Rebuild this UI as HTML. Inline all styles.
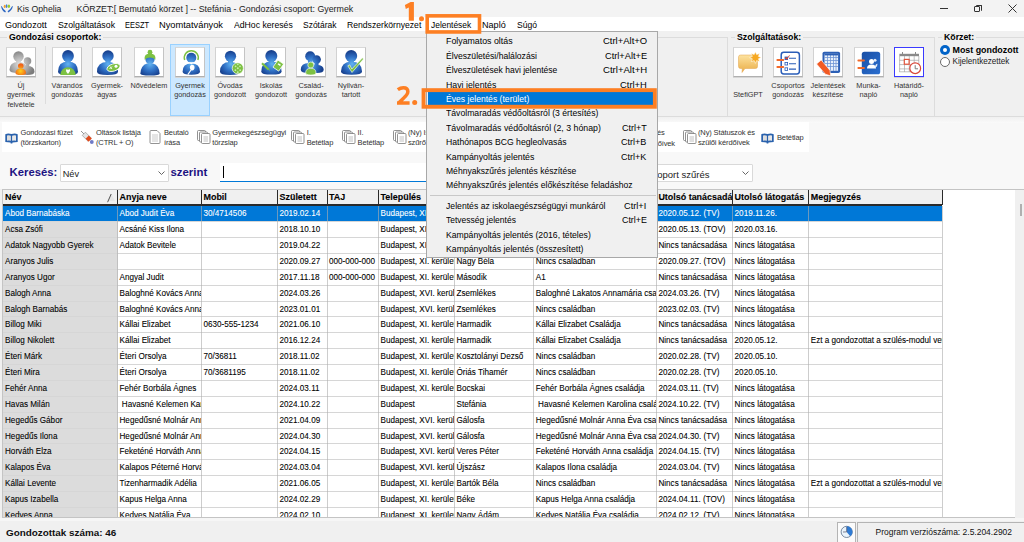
<!DOCTYPE html><html><head><meta charset="utf-8"><style>
*{margin:0;padding:0;box-sizing:border-box}
html,body{width:1024px;height:542px;overflow:hidden;background:#f0f0f0;font-family:"Liberation Sans",sans-serif;color:#000;position:relative}
.abs{position:absolute;white-space:nowrap}
.t{position:absolute;white-space:nowrap;line-height:1}
#title{left:0;top:0;width:1024px;height:17px;background:#f3f3f3}
#menubar{left:0;top:17px;width:1024px;height:14px;background:#fff}
.mi{position:absolute;top:19.8px;font-size:9px;line-height:10px;color:#000}
#grp{left:0;top:31px;width:1024px;height:86px;background:#f0f0f0}
.gl{position:absolute;background:#dcdcdc}
.glab{position:absolute;font-weight:bold;font-size:8.75px;line-height:10px;background:#f0f0f0;padding:0 2px;color:#000}
.ib{position:absolute;top:47px;width:30px;height:30px;background:#fff;border:1px solid;border-color:#d8d8d8 #c4c4c4 #b0b0b0 #d2d2d2;box-shadow:0 1px 0 #d6d6d6}
.ib svg{position:absolute;left:1px;top:1px}
.il{position:absolute;top:80.5px;width:44px;text-align:center;font-size:7.3px;line-height:9.7px;color:#333}
#strip{left:0;top:117px;width:1024px;height:72px;background:#f8f8f8}
#tb{left:2px;top:122px;width:807px;height:30px;background:#fff}
.tl{position:absolute;font-size:7.5px;letter-spacing:-0.13px;line-height:9.8px;color:#333}
#grid{left:2px;top:189px;width:1022px;height:329px;background:#fff;border:1px solid #c4c4c4;border-right:none;overflow:hidden}
.hd{position:absolute;top:190px;height:14.5px;font-weight:bold;font-size:8.95px;line-height:15.6px;padding-left:2px;overflow:hidden;white-space:nowrap;-webkit-text-stroke:0.1px #000}
.c{position:absolute;height:15px;font-size:8.15px;line-height:15.5px;padding-left:2px;overflow:hidden;white-space:nowrap;color:#000;-webkit-text-stroke:0.08px currentColor}
.sel{color:#fff}
.c0{background:#dcdcdc}
#status{left:0;top:521px;width:1024px;height:21px;background:#f0f0f0}
#stband{left:0;top:518px;width:1024px;height:3px;background:#f6f6f6}
#menu{left:426px;top:31px;width:232px;height:227px;background:#f0f0f0;border:1px solid #a8a8a8}
.mt{position:absolute;left:19px;font-size:8.8px;line-height:10px;color:#000}
.ms{position:absolute;right:9px;font-size:8.8px;line-height:10px;color:#000;text-align:right}
.orange{position:absolute;border:3.7px solid #fd7f23}
.onum{position:absolute;font-weight:bold;color:#ff7f27;font-size:26px;line-height:26px}
</style></head><body>
<div id="title" class="abs"></div>
<svg class="abs" style="left:0;top:0" width="15" height="15" viewBox="0 0 15 15"><path d="M1.1 6.2 Q1.6 10.3 5.2 12.6 L5.9 11.2 Q3.2 9.6 1.6 6.1Z" fill="#2d66c2"/><path d="M12.8 6.2 Q12.3 10.3 8.2 12.5 L7.6 11.2 Q10.6 9.6 12.2 6.1Z" fill="#2d66c2"/><ellipse cx="4.7" cy="6.4" rx="1" ry="1.6" fill="#f7a12a"/><ellipse cx="6.6" cy="6.1" rx="0.9" ry="1.9" fill="#3f7fd6"/><ellipse cx="8.9" cy="6.2" rx="1.2" ry="1.7" fill="#9ccc2c"/></svg>
<div class="t" style="left:17px;top:5px;font-size:8.7px;color:#222">Kis Ophelia</div>
<div class="t" style="left:76.5px;top:5px;font-size:8.84px;color:#222">KÖRZET:[ Bemutató körzet ] -- Stefánia - Gondozási csoport: Gyermek</div>
<div class="abs" style="left:940px;top:8px;width:8px;height:1px;background:#333"></div>
<div class="abs" style="left:974px;top:6px;width:6px;height:6px;border:1px solid #333;border-radius:1px"></div><div class="abs" style="left:976px;top:4.5px;width:6px;height:6px;border-top:1px solid #333;border-right:1px solid #333;border-radius:1px"></div>
<svg class="abs" style="left:1008px;top:4px" width="9" height="9"><path d="M0.5 0.5L8.5 8.5M8.5 0.5L0.5 8.5" stroke="#333" stroke-width="1"/></svg>
<div id="menubar" class="abs"></div>
<div class="mi" style="left:5px;transform:scaleX(1.004);transform-origin:0 0">Gondozott</div>
<div class="mi" style="left:57.5px;transform:scaleX(0.974);transform-origin:0 0">Szolgáltatások</div>
<div class="mi" style="left:124.5px;transform:scaleX(0.827);transform-origin:0 0">EESZT</div>
<div class="mi" style="left:159px;transform:scaleX(1.032);transform-origin:0 0">Nyomtatványok</div>
<div class="mi" style="left:233.5px;transform:scaleX(0.963);transform-origin:0 0">AdHoc keresés</div>
<div class="mi" style="left:303px;transform:scaleX(0.943);transform-origin:0 0">Szótárak</div>
<div class="mi" style="left:346.75px;transform:scaleX(0.958);transform-origin:0 0">Rendszerkörnyezet</div>
<div class="mi" style="left:431.4px;transform:scaleX(0.934);transform-origin:0 0">Jelentések</div>
<div class="mi" style="left:482.25px;transform:scaleX(1.010);transform-origin:0 0">Napló</div>
<div class="mi" style="left:517px;transform:scaleX(0.952);transform-origin:0 0">Súgó</div>
<div id="grp" class="abs"></div>
<div class="gl" style="left:0;top:37px;width:727px;height:1px"></div>
<div class="gl" style="left:726.5px;top:37px;width:1px;height:80px"></div>
<div class="gl" style="left:731px;top:37px;width:204px;height:1px"></div>
<div class="gl" style="left:934px;top:37px;width:1px;height:80px"></div>
<div class="gl" style="left:938px;top:37px;width:86px;height:1px"></div>
<div class="gl" style="left:0;top:116px;width:1024px;height:1px"></div>
<div class="gl" style="left:45px;top:46px;width:1px;height:58px"></div>
<div class="glab" style="left:7px;top:32.4px">Gondozási csoportok:</div>
<div class="glab" style="left:735px;top:32.4px">Szolgáltatások:</div>
<div class="glab" style="left:942px;top:32.4px">Körzet:</div>
<div class="abs" style="left:170px;top:44px;width:40px;height:72px;background:#cce8ff;border:1px solid #99d1ff"></div>
<svg width="0" height="0" style="position:absolute"><defs>
<radialGradient id="gb" gradientUnits="userSpaceOnUse" cx="14" cy="15" r="13"><stop offset="0" stop-color="#62b4f2"/><stop offset="0.55" stop-color="#2f6fc4"/><stop offset="1" stop-color="#173f8c"/></radialGradient>
<radialGradient id="gb2" gradientUnits="userSpaceOnUse" cx="12" cy="16" r="13"><stop offset="0" stop-color="#62b4f2"/><stop offset="0.55" stop-color="#2f6fc4"/><stop offset="1" stop-color="#173f8c"/></radialGradient>
<radialGradient id="gg" gradientUnits="userSpaceOnUse" cx="12" cy="15" r="14"><stop offset="0" stop-color="#e2e2e2"/><stop offset="0.6" stop-color="#a9a9a9"/><stop offset="1" stop-color="#7c7c7c"/></radialGradient>
<radialGradient id="go" gradientUnits="userSpaceOnUse" cx="12.5" cy="22" r="6"><stop offset="0" stop-color="#ffd21a"/><stop offset="1" stop-color="#f0641a"/></radialGradient>
<linearGradient id="gy" x1="0" y1="0" x2="0" y2="1"><stop offset="0" stop-color="#fde3a0"/><stop offset="1" stop-color="#e9ac45"/></linearGradient>
<linearGradient id="gn" x1="0" y1="0" x2="1" y2="1"><stop offset="0" stop-color="#1a4fa5"/><stop offset="1" stop-color="#2a6fd0"/></linearGradient>
</defs></svg>
<div class="ib" style="left:6px"><svg width="28" height="28" viewBox="0 0 28 28"><circle cx="10.5" cy="7.5" r="5.2" fill="url(#gg)"/><rect x="8.16" y="10.620000000000001" width="4.680000000000001" height="4.38" fill="url(#gg)"/><path d="M1.5 20.8 Q1.5 13 10.25 13 Q19 13 19 20.8 Q19 24 10.25 24 Q1.5 24 1.5 20.8Z" fill="url(#gg)"/><circle cx="19.5" cy="12" r="3.8" fill="url(#gg)"/><rect x="17.79" y="14.28" width="3.42" height="4.720000000000001" fill="url(#gg)"/><path d="M12 22.8 Q12 17 19.25 17 Q26.5 17 26.5 22.8 Q26.5 26 19.25 26 Q12 26 12 22.8Z" fill="url(#gg)"/><circle cx="12.8" cy="17" r="2.8" fill="url(#go)"/><path d="M7.5 24 Q7.5 19.5 12.8 19.5 Q18 19.5 18 24 Q18 26 12.8 26 Q7.5 26 7.5 24Z" fill="url(#go)"/></svg></div>
<div class="il" style="left:-1px">Új<br>gyermek<br>felvétele</div>
<div class="ib" style="left:52px"><svg width="28" height="28" viewBox="0 0 28 28"><circle cx="14" cy="7" r="5.9" fill="url(#gb)"/><rect x="11.344999999999999" y="10.54" width="5.3100000000000005" height="3.96" fill="url(#gb)"/><path d="M4 22.8 Q4 12.5 14.0 12.5 Q24 12.5 24 22.8 Q24 26 14.0 26 Q4 26 4 22.8Z" fill="url(#gb)"/><path d="M6.3 26 A7.7 7.7 0 0 1 21.7 26Z" fill="#7dc143"/><path d="M14 25 Q11.5 22.5 12 20.8 Q13 19.8 14 21 Q15.2 19.6 16 20.5 Q16.5 22 14 25Z" fill="#fff"/></svg></div>
<div class="il" style="left:45px">Várandós<br>gondozás</div>
<div class="ib" style="left:92px"><svg width="28" height="28" viewBox="0 0 28 28"><circle cx="14" cy="7" r="5.7" fill="url(#gb)"/><rect x="11.435" y="10.42" width="5.13" height="4.58" fill="url(#gb)"/><path d="M3 22.8 Q3 13 13.5 13 Q24 13 24 22.8 Q24 26 13.5 26 Q3 26 3 22.8Z" fill="url(#gb)"/><ellipse cx="19.5" cy="18.5" rx="6.8" ry="3.6" transform="rotate(-18 19.5 18.5)" fill="#7dc143" stroke="#fff" stroke-width="0.8"/><path d="M15.5 20 L18 17.5 M16 17.5 L18 20" stroke="#fff" stroke-width="0.9"/><circle cx="22" cy="17.3" r="1.5" fill="#fff"/></svg></div>
<div class="il" style="left:85px">Gyermek-<br>ágyas</div>
<div class="ib" style="left:134px"><svg width="28" height="28" viewBox="0 0 28 28"><circle cx="14" cy="10.5" r="4.6" fill="url(#gb)"/><path d="M4.4 24.6 Q4.8 16.5 11 14.6 L14 14 L17 14.6 Q23.2 16.5 23.6 24.6 Q23.6 26.6 14 26.6 Q4.4 26.6 4.4 24.6Z" fill="url(#gb)"/><circle cx="14" cy="3.2" r="2.4" fill="#7dc143"/><path d="M8.6 10.8 Q7.8 4.6 14 4.6 Q20.2 4.6 19.4 10.8 Q17 8.4 14 8.4 Q11 8.4 8.6 10.8Z" fill="#7dc143"/></svg></div>
<div class="il" style="left:127px">Nővédelem</div>
<div class="ib" style="left:175px"><svg width="28" height="28" viewBox="0 0 28 28"><path d="M7.7 11 A7 7 0 1 1 20.9 11" stroke="#7dc143" stroke-width="1.5" fill="none"/><circle cx="14.3" cy="8.8" r="5" fill="url(#gb)"/><path d="M5.6 22.8 Q5.6 14.6 14.3 14.6 Q23 14.6 23 22.8 Q23 25.7 14.3 25.7 Q5.6 25.7 5.6 22.8Z" fill="url(#gb)"/><path d="M11.8 13.2 L16.8 13.2 L14.3 15.6Z" fill="#fff"/><ellipse cx="15.2" cy="18.6" rx="2.3" ry="2.8" fill="#fff"/><path d="M14.2 20.8 L10.8 25.6" stroke="#fff" stroke-width="1.1"/></svg></div>
<div class="il" style="left:168px">Gyermek<br>gondozás</div>
<div class="ib" style="left:215px"><svg width="28" height="28" viewBox="0 0 28 28"><circle cx="13.5" cy="7.3" r="5.6" fill="url(#gb)"/><rect x="10.98" y="10.66" width="5.04" height="4.34" fill="url(#gb)"/><path d="M3 22.8 Q3 13 13.0 13 Q23 13 23 22.8 Q23 26 13.0 26 Q3 26 3 22.8Z" fill="url(#gb)"/><circle cx="20.8" cy="19.3" r="5.6" fill="#7dc143" stroke="#fff" stroke-width="0.7"/><circle cx="20.8" cy="19.3" r="1" fill="#c9ecac"/><circle cx="18.6" cy="17.3" r="0.9" fill="#c9ecac"/><circle cx="23" cy="17.3" r="0.9" fill="#c9ecac"/><circle cx="18.4" cy="21.2" r="0.9" fill="#c9ecac"/><circle cx="23.2" cy="21.2" r="0.9" fill="#c9ecac"/><circle cx="20.8" cy="23.2" r="0.9" fill="#c9ecac"/><circle cx="20.8" cy="15.3" r="0.9" fill="#c9ecac"/></svg></div>
<div class="il" style="left:208px">Óvodás<br>gondozott</div>
<div class="ib" style="left:256px"><svg width="28" height="28" viewBox="0 0 28 28"><circle cx="13.3" cy="7" r="6" fill="url(#gb)"/><rect x="10.600000000000001" y="10.6" width="5.4" height="4.0" fill="url(#gb)"/><path d="M3.3 22.400000000000002 Q3.3 12.6 13.450000000000001 12.6 Q23.6 12.6 23.6 22.400000000000002 Q23.6 25.6 13.450000000000001 25.6 Q3.3 25.6 3.3 22.400000000000002Z" fill="url(#gb)"/><rect x="16.8" y="12.3" width="7" height="8.6" transform="rotate(35 20.3 16.6)" fill="#7dc143" stroke="#fff" stroke-width="0.7"/><rect x="19" y="14.5" width="3" height="1.5" transform="rotate(35 20.3 16.6)" fill="#fff"/><path d="M4 14.3 L10.5 20.5" stroke="#7dc143" stroke-width="2.2"/><path d="M10 20 L12 22.5 L11 19.5Z" fill="#7dc143"/></svg></div>
<div class="il" style="left:249px">Iskolás<br>gondozott</div>
<div class="ib" style="left:296px"><svg width="28" height="28" viewBox="0 0 28 28"><circle cx="12.2" cy="7.2" r="5" fill="url(#gb)"/><rect x="9.95" y="10.2" width="4.5" height="5.8" fill="url(#gb)"/><path d="M2.8 20.8 Q2.8 14 10.9 14 Q19 14 19 20.8 Q19 24 10.9 24 Q2.8 24 2.8 20.8Z" fill="url(#gb)"/><circle cx="18.6" cy="10.5" r="4.3" fill="url(#gb2)"/><rect x="16.665000000000003" y="13.08" width="3.87" height="4.92" fill="url(#gb2)"/><path d="M12 20.8 Q12 16 18.85 16 Q25.7 16 25.7 20.8 Q25.7 24 18.85 24 Q12 24 12 20.8Z" fill="url(#gb2)"/><circle cx="12.8" cy="16" r="3" fill="#7dc143" stroke="#fff" stroke-width="0.6"/><path d="M7.6 24 Q7.6 19.3 12.8 19.3 Q18 19.3 18 24 Q18 26 12.8 26 Q7.6 26 7.6 24Z" fill="#7dc143" stroke="#fff" stroke-width="0.6"/></svg></div>
<div class="il" style="left:289px">Család-<br>gondozás</div>
<div class="ib" style="left:336px"><svg width="28" height="28" viewBox="0 0 28 28"><circle cx="13.2" cy="7" r="6" fill="url(#gb)"/><rect x="10.5" y="10.6" width="5.4" height="4.200000000000001" fill="url(#gb)"/><path d="M3 22.6 Q3 12.8 13.5 12.8 Q24 12.8 24 22.6 Q24 25.8 13.5 25.8 Q3 25.8 3 22.6Z" fill="url(#gb)"/><path d="M9.8 16.8 L11.8 15.8 L13.8 20 L24.5 8.8 L25.5 10 L14 23.5Z" fill="#7dc143" stroke="#fff" stroke-width="0.6"/></svg></div>
<div class="il" style="left:329px">Nyilván-<br>tartott</div>
<div class="ib" style="left:733px"><svg width="28" height="28" viewBox="0 0 28 28"><path d="M3.5 8 Q3.5 6 5.5 6 L20.5 6 Q22.5 6 22.5 8 L22.5 17.5 Q22.5 19.5 20.5 19.5 L10 19.5 L7 23.5 L7.3 19.5 L5.5 19.5 Q3.5 19.5 3.5 17.5Z" fill="url(#gy)" stroke="#e2a24a" stroke-width="0.5"/><path d="M20.4 2.8 L21.6 5.6 L24.5 4.6 L23.4 7.4 L26.2 8.6 L23.4 9.8 L24.5 12.6 L21.6 11.6 L20.4 14.4 L19.2 11.6 L16.3 12.6 L17.4 9.8 L14.6 8.6 L17.4 7.4 L16.3 4.6 L19.2 5.6Z" fill="#f6a821" stroke="#fff" stroke-width="0.5"/></svg></div>
<div class="il" style="left:726px"><br>StefiGPT</div>
<div class="ib" style="left:773px"><svg width="28" height="28" viewBox="0 0 28 28"><rect x="6.2" y="3.3" width="18.2" height="21.6" rx="2.6" fill="#fff" stroke="#2a5db8" stroke-width="1.5"/><path d="M2.3 11 H8.3 M2.3 18 H8.3" stroke="#f26a2a" stroke-width="1.8" stroke-linecap="round"/><rect x="10" y="8" width="2.6" height="2.6" fill="#e2533a" stroke="#2a5db8" stroke-width="0.8"/><rect x="10" y="13.4" width="2.6" height="2.6" fill="none" stroke="#2a5db8" stroke-width="0.8"/><rect x="10" y="18.8" width="2.6" height="2.6" fill="none" stroke="#2a5db8" stroke-width="0.8"/><path d="M14 9.3H21 M14 14.7H21 M14 20.1H21" stroke="#2a5db8" stroke-width="1.1"/><path d="M10.5 9 L11.8 10.3 L14.5 6.3" stroke="#e03a2c" stroke-width="0.9" fill="none"/></svg></div>
<div class="il" style="left:766px">Csoportos<br>gondozás</div>
<div class="ib" style="left:813px"><svg width="28" height="28" viewBox="0 0 28 28"><rect x="7.5" y="2.7" width="17.6" height="21.3" rx="1.8" fill="#2c5fb5"/><rect x="9.5" y="4.8" width="13.6" height="17" fill="#e8f0fb"/><path d="M9.5 8.5H23 M9.5 11.5H23 M9.5 14.5H23 M9.5 17.5H23 M12.5 5V22 M15.5 5V22 M18.5 5V22 M21 5V22" stroke="#6f95d6" stroke-width="0.8"/><rect x="9.5" y="4.8" width="13.6" height="1.6" fill="#2c5fb5"/><path d="M1.6 15 L6.2 11 L15 21.4 L15.6 26.8 L10.4 25.2Z" fill="#f15a24" stroke="#fff" stroke-width="0.6"/></svg></div>
<div class="il" style="left:806px">Jelentések<br>készítése</div>
<div class="ib" style="left:853.5px"><svg width="28" height="28" viewBox="0 0 28 28"><rect x="5.8" y="2.7" width="18.4" height="22.6" rx="2.6" fill="url(#gn)"/><path d="M2.3 11.5H8 M2.3 19H8" stroke="#f26a2a" stroke-width="1.8" stroke-linecap="round"/><circle cx="15.5" cy="12.5" r="2.5" fill="#fff"/><path d="M11 19.5 Q11 15.5 15.5 15.5 Q20 15.5 20 19.5Z" fill="#fff"/><circle cx="19" cy="11.3" r="1.5" fill="#e4ecf7"/><path d="M18.5 18.5 Q19.5 15 21.5 14.8 L21 17.5Z" fill="#e4ecf7"/></svg></div>
<div class="il" style="left:846.5px">Munka-<br>napló</div>
<div class="ib" style="left:894px;border:1px solid #3a3aff"><svg width="28" height="28" viewBox="0 0 28 28"><rect x="3.4" y="5.3" width="19.6" height="17.6" fill="#fff"/><rect x="3.4" y="4.8" width="19.6" height="2.4" fill="#8a8a8a"/><path d="M3.6 7V23 M8.5 7V23 M13.3 7V23 M18.2 7V23 M22.8 7V23 M3.4 11.3H23 M3.4 15.6H23 M3.4 19.9H23 M3.4 22.8H23" stroke="#a6a6a6" stroke-width="0.7"/><path d="M6.5 3V6 M19.5 3V6" stroke="#8a8a8a" stroke-width="1"/><rect x="8.3" y="10.4" width="4.8" height="4.8" fill="#fff" stroke="#e2533a" stroke-width="1.2"/><circle cx="19.2" cy="19.2" r="5.4" fill="#fff" stroke="#d9473a" stroke-width="1.2"/><path d="M19.2 16.2V19.8H22" stroke="#7a7a7a" stroke-width="1" fill="none"/></svg></div>
<div class="il" style="left:887px">Határidő-<br>napló</div>
<div class="abs" style="left:940px;top:45px;width:10px;height:10px;border-radius:50%;background:#0063c8"></div><div class="abs" style="left:943px;top:48px;width:4px;height:4px;border-radius:50%;background:#fff"></div>
<div class="t" style="left:952.5px;top:46px;font-size:8.9px;font-weight:bold">Most gondozott</div>
<div class="abs" style="left:940px;top:57px;width:10px;height:10px;border-radius:50%;border:1px solid #6a6a6a;background:#fff"></div>
<div class="t" style="left:952.5px;top:58px;font-size:8.15px;color:#222">Kijelentkezettek</div>
<div id="strip" class="abs"></div>
<div class="abs" style="left:0;top:117px;width:1024px;height:6px;background:linear-gradient(#f0f0f0,#fafafa)"></div>
<div id="tb" class="abs"></div>
<svg class="abs" style="left:5px;top:132.5px" width="13" height="11" viewBox="0 0 13 11"><path d="M0.3 1.2 Q3.3 -0.1 6.5 1.1 Q9.7 -0.1 12.7 1.2 L12.7 9 L7.5 9.4 L7.3 10.4 L5.7 10.4 L5.5 9.4 L0.3 9Z" fill="#2a62ad"/><path d="M2 2.6 Q4 2 5.9 2.7 L5.9 7.8 Q4 7.3 2 7.7Z" fill="#dedede"/><path d="M7.1 2.7 Q9 2 11 2.6 L11 7.7 Q9 7.3 7.1 7.8Z" fill="#e8e8e8"/></svg>
<svg class="abs" style="left:80px;top:130px" width="15" height="15" viewBox="0 0 15 15"><path d="M1 1 L4 4" stroke="#777" stroke-width="0.8"/><path d="M2.2 5.4 L5.4 2.2 L11.2 8 L8 11.2Z" fill="#e4e4e4" stroke="#8a8a8a" stroke-width="0.6"/><path d="M5.6 8.8 L8.8 5.6 L11.8 8.6 L8.6 11.8Z" fill="#e04a1c"/><circle cx="11.8" cy="12" r="1.9" fill="#6f7bc8"/></svg>
<svg class="abs" style="left:149px;top:130px" width="12" height="14" viewBox="0 0 12 14"><path d="M1 1.5 Q1 0.5 2 0.5 L8 0.5 L11 3.5 L11 12.5 Q11 13.5 10 13.5 L2 13.5 Q1 13.5 1 12.5Z" fill="#fff" stroke="#777" stroke-width="0.8"/><path d="M3 5H9 M3 7H9 M3 9H9 M3 11H9" stroke="#aaa" stroke-width="0.6"/></svg>
<svg class="abs" style="left:196.5px;top:130px" width="14" height="14" viewBox="0 0 14 14"><rect x="0.5" y="0.5" width="8" height="10" rx="1" fill="#fff" stroke="#777" stroke-width="0.8"/><rect x="2.5" y="2" width="8" height="10" rx="1" fill="#fff" stroke="#777" stroke-width="0.8"/><rect x="4.5" y="3.5" width="8.5" height="10" rx="1" fill="#fff" stroke="#777" stroke-width="0.8"/><path d="M6.5 7H11 M6.5 9H11 M6.5 11H11" stroke="#999" stroke-width="0.6"/></svg>
<svg class="abs" style="left:291px;top:130px" width="14" height="14" viewBox="0 0 14 14"><rect x="0.5" y="0.5" width="8" height="10" rx="1" fill="#fff" stroke="#777" stroke-width="0.8"/><rect x="2.5" y="2" width="8" height="10" rx="1" fill="#fff" stroke="#777" stroke-width="0.8"/><rect x="4.5" y="3.5" width="8.5" height="10" rx="1" fill="#fff" stroke="#777" stroke-width="0.8"/><path d="M6.5 7H11 M6.5 9H11 M6.5 11H11" stroke="#999" stroke-width="0.6"/></svg>
<svg class="abs" style="left:342px;top:130px" width="14" height="14" viewBox="0 0 14 14"><rect x="0.5" y="0.5" width="8" height="10" rx="1" fill="#fff" stroke="#777" stroke-width="0.8"/><rect x="2.5" y="2" width="8" height="10" rx="1" fill="#fff" stroke="#777" stroke-width="0.8"/><rect x="4.5" y="3.5" width="8.5" height="10" rx="1" fill="#fff" stroke="#777" stroke-width="0.8"/><path d="M6.5 7H11 M6.5 9H11 M6.5 11H11" stroke="#999" stroke-width="0.6"/></svg>
<svg class="abs" style="left:392.5px;top:130px" width="14" height="14" viewBox="0 0 14 14"><rect x="0.5" y="0.5" width="8" height="10" rx="1" fill="#fff" stroke="#777" stroke-width="0.8"/><rect x="2.5" y="2" width="8" height="10" rx="1" fill="#fff" stroke="#777" stroke-width="0.8"/><rect x="4.5" y="3.5" width="8.5" height="10" rx="1" fill="#fff" stroke="#777" stroke-width="0.8"/><path d="M6.5 7H11 M6.5 9H11 M6.5 11H11" stroke="#999" stroke-width="0.6"/></svg>
<svg class="abs" style="left:683px;top:130px" width="14" height="14" viewBox="0 0 14 14"><rect x="0.5" y="0.5" width="8" height="10" rx="1" fill="#fff" stroke="#777" stroke-width="0.8"/><rect x="2.5" y="2" width="8" height="10" rx="1" fill="#fff" stroke="#777" stroke-width="0.8"/><rect x="4.5" y="3.5" width="8.5" height="10" rx="1" fill="#fff" stroke="#777" stroke-width="0.8"/><path d="M6.5 7H11 M6.5 9H11 M6.5 11H11" stroke="#999" stroke-width="0.6"/></svg>
<svg class="abs" style="left:761px;top:132.5px" width="13" height="11" viewBox="0 0 13 11"><path d="M0.3 1.2 Q3.3 -0.1 6.5 1.1 Q9.7 -0.1 12.7 1.2 L12.7 9 L7.5 9.4 L7.3 10.4 L5.7 10.4 L5.5 9.4 L0.3 9Z" fill="#2a62ad"/><path d="M2 2.6 Q4 2 5.9 2.7 L5.9 7.8 Q4 7.3 2 7.7Z" fill="#dedede"/><path d="M7.1 2.7 Q9 2 11 2.6 L11 7.7 Q9 7.3 7.1 7.8Z" fill="#e8e8e8"/></svg>
<div class="tl" style="left:20.5px;top:128.3px">Gondozási füzet<br>(törzskarton)</div>
<div class="tl" style="left:96px;top:128.3px">Oltások listája<br>(CTRL + O)</div>
<div class="tl" style="left:164px;top:128.3px">Beutaló<br>írása</div>
<div class="tl" style="left:212.3px;top:128.3px">Gyermekegészségügyi<br>törzslap</div>
<div class="tl" style="left:306.7px;top:128.3px">I.<br>Betétlap</div>
<div class="tl" style="left:357.6px;top:128.3px">II.<br>Betétlap</div>
<div class="tl" style="left:408px;top:128.3px">(Ny) Ismételt<br>szűrő kérdőívek</div>
<div class="tl" style="left:698px;top:128.3px">(Ny) Státuszok és<br>szülői kérdőívek</div>
<div class="tl" style="left:777px;top:133px">Betétlap</div>
<div class="tl" style="right:359.4px;top:128.3px">Életkori szűrések és</div><div class="tl" style="right:349px;top:138.5px">szülői kérdőívek</div>
<div class="t" style="left:9.6px;top:167.3px;font-size:11.3px;font-weight:bold;color:#1c1282">Keresés:</div>
<div class="abs" style="left:60px;top:164px;width:108.5px;height:17.5px;background:#fff;border:1px solid #d9d9d9;border-radius:1px"></div>
<div class="t" style="left:62.7px;top:169.8px;font-size:9.2px;color:#222">Név</div>
<svg class="abs" style="left:158px;top:171px" width="7" height="4"><path d="M0.5 0.5L3.5 3.5L6.5 0.5" stroke="#555" fill="none" stroke-width="0.9"/></svg>
<div class="t" style="left:170.5px;top:167.3px;font-size:11.4px;font-weight:bold;color:#1c1282">szerint</div>
<div class="abs" style="left:219.5px;top:163px;width:427px;height:19px;background:#fff;border-bottom:1.5px solid #0078d7"></div>
<div class="abs" style="left:222.5px;top:166px;width:1px;height:12px;background:#000"></div>
<div class="abs" style="left:590px;top:164px;width:162.5px;height:17.5px;background:#fff;border:1px solid #d9d9d9;border-radius:1px"></div>
<div class="t" style="right:314.5px;top:169.8px;font-size:9.5px;color:#222">Gondozási csoport szűrés</div>
<svg class="abs" style="left:742px;top:171px" width="7" height="4"><path d="M0.5 0.5L3.5 3.5L6.5 0.5" stroke="#555" fill="none" stroke-width="0.9"/></svg>
<div id="grid" class="abs"></div>
<div class="abs" style="left:1014.8px;top:190px;width:9.2px;height:328px;background:#f0f0f0"></div>
<div class="abs" style="left:1020px;top:203.5px;width:1.6px;height:12.5px;background:#b0b0b0"></div>
<div class="abs" style="left:3px;top:190px;width:939.4px;height:16.3px;background:#f0f0f0;border-bottom:2px solid #2a2a2a"></div>
<div class="hd" style="left:3px;width:113.5px">Név</div>
<div class="abs" style="left:117.0px;top:190px;width:1px;height:15px;background:#2a2a2a"></div>
<div class="hd" style="left:117.5px;width:83.0px">Anyja neve</div>
<div class="abs" style="left:201.0px;top:190px;width:1px;height:15px;background:#2a2a2a"></div>
<div class="hd" style="left:201.5px;width:75.0px">Mobil</div>
<div class="abs" style="left:277.0px;top:190px;width:1px;height:15px;background:#2a2a2a"></div>
<div class="hd" style="left:277.5px;width:48.5px">Született</div>
<div class="abs" style="left:326.5px;top:190px;width:1px;height:15px;background:#2a2a2a"></div>
<div class="hd" style="left:327px;width:50.5px">TAJ</div>
<div class="abs" style="left:378.0px;top:190px;width:1px;height:15px;background:#2a2a2a"></div>
<div class="hd" style="left:378.5px;width:75.0px">Település</div>
<div class="abs" style="left:454.0px;top:190px;width:1px;height:15px;background:#2a2a2a"></div>
<div class="hd" style="left:454.5px;width:78.25px">Utca</div>
<div class="abs" style="left:533.25px;top:190px;width:1px;height:15px;background:#2a2a2a"></div>
<div class="hd" style="left:533.75px;width:121.64999999999998px">Család</div>
<div class="abs" style="left:655.9px;top:190px;width:1px;height:15px;background:#2a2a2a"></div>
<div class="hd" style="left:656.4px;width:75.20000000000005px">Utolsó tanácsadás</div>
<div class="abs" style="left:732.1px;top:190px;width:1px;height:15px;background:#2a2a2a"></div>
<div class="hd" style="left:732.6px;width:75.14999999999998px">Utolsó látogatás</div>
<div class="abs" style="left:808.25px;top:190px;width:1px;height:15px;background:#2a2a2a"></div>
<div class="hd" style="left:808.75px;width:132.64999999999998px">Megjegyzés</div>
<div class="abs" style="left:941.9px;top:190px;width:1px;height:15px;background:#2a2a2a"></div>
<svg class="abs" style="left:104.5px;top:191px" width="12" height="13"><path d="M6 2 L10 10 L2 10Z" fill="#e6e6e6"/><path d="M2.6 11.2 L6.2 3" stroke="#444" stroke-width="0.9"/></svg>
<div class="abs" style="left:3px;top:206.3px;width:939.4px;height:15.280000000000001px;background:#0078d7"></div>
<div class="abs" style="left:3px;top:222.18px;width:114.5px;height:294.82px;background:#dcdcdc"></div>
<div class="abs" style="left:0;top:206.3px;width:1024px;height:310.7px;overflow:hidden">
<div class="abs" style="left:3px;top:14.88px;width:939.4px;height:1px;background:#d6d6d6"></div>
<div class="abs" style="left:3px;top:30.76px;width:939.4px;height:1px;background:#d6d6d6"></div>
<div class="abs" style="left:3px;top:46.64px;width:939.4px;height:1px;background:#d6d6d6"></div>
<div class="abs" style="left:3px;top:62.52px;width:939.4px;height:1px;background:#d6d6d6"></div>
<div class="abs" style="left:3px;top:78.40px;width:939.4px;height:1px;background:#d6d6d6"></div>
<div class="abs" style="left:3px;top:94.28px;width:939.4px;height:1px;background:#d6d6d6"></div>
<div class="abs" style="left:3px;top:110.16px;width:939.4px;height:1px;background:#d6d6d6"></div>
<div class="abs" style="left:3px;top:126.04px;width:939.4px;height:1px;background:#d6d6d6"></div>
<div class="abs" style="left:3px;top:141.92px;width:939.4px;height:1px;background:#d6d6d6"></div>
<div class="abs" style="left:3px;top:157.80px;width:939.4px;height:1px;background:#d6d6d6"></div>
<div class="abs" style="left:3px;top:173.68px;width:939.4px;height:1px;background:#d6d6d6"></div>
<div class="abs" style="left:3px;top:189.56px;width:939.4px;height:1px;background:#d6d6d6"></div>
<div class="abs" style="left:3px;top:205.44px;width:939.4px;height:1px;background:#d6d6d6"></div>
<div class="abs" style="left:3px;top:221.32px;width:939.4px;height:1px;background:#d6d6d6"></div>
<div class="abs" style="left:3px;top:237.20px;width:939.4px;height:1px;background:#d6d6d6"></div>
<div class="abs" style="left:3px;top:253.08px;width:939.4px;height:1px;background:#d6d6d6"></div>
<div class="abs" style="left:3px;top:268.96px;width:939.4px;height:1px;background:#d6d6d6"></div>
<div class="abs" style="left:3px;top:284.84px;width:939.4px;height:1px;background:#d6d6d6"></div>
<div class="abs" style="left:3px;top:300.72px;width:939.4px;height:1px;background:#d6d6d6"></div>
<div class="abs" style="left:3px;top:316.60px;width:939.4px;height:1px;background:#d6d6d6"></div>
<div class="abs" style="left:117.0px;top:0;width:1px;height:312px;background:rgba(175,175,175,0.62)"></div>
<div class="abs" style="left:201.0px;top:0;width:1px;height:312px;background:rgba(175,175,175,0.62)"></div>
<div class="abs" style="left:277.0px;top:0;width:1px;height:312px;background:rgba(175,175,175,0.62)"></div>
<div class="abs" style="left:326.5px;top:0;width:1px;height:312px;background:rgba(175,175,175,0.62)"></div>
<div class="abs" style="left:378.0px;top:0;width:1px;height:312px;background:rgba(175,175,175,0.62)"></div>
<div class="abs" style="left:454.0px;top:0;width:1px;height:312px;background:rgba(175,175,175,0.62)"></div>
<div class="abs" style="left:533.25px;top:0;width:1px;height:312px;background:rgba(175,175,175,0.62)"></div>
<div class="abs" style="left:655.9px;top:0;width:1px;height:312px;background:rgba(175,175,175,0.62)"></div>
<div class="abs" style="left:732.1px;top:0;width:1px;height:312px;background:rgba(175,175,175,0.62)"></div>
<div class="abs" style="left:808.25px;top:0;width:1px;height:312px;background:rgba(175,175,175,0.62)"></div>
<div class="abs" style="left:941.9px;top:0;width:1px;height:312px;background:rgba(175,175,175,0.62)"></div>
<div class="c sel" style="left:3px;top:0.00px;width:114.20px">Abod Barnabáska</div>
<div class="c sel" style="left:117.5px;top:0.00px;width:83.70px">Abod Judit Éva</div>
<div class="c sel" style="left:201.5px;top:0.00px;width:75.70px">30/4714506</div>
<div class="c sel" style="left:277.5px;top:0.00px;width:49.20px">2019.02.14</div>
<div class="c sel" style="left:378.5px;top:0.00px;width:75.70px">Budapest, XI. kerület</div>
<div class="c sel" style="left:454.5px;top:0.00px;width:78.95px">Petőfi</div>
<div class="c sel" style="left:533.75px;top:0.00px;width:122.35px">Abod Judit Éva családja</div>
<div class="c sel" style="left:656.4px;top:0.00px;width:75.90px">2020.05.12. (TV)</div>
<div class="c sel" style="left:732.6px;top:0.00px;width:75.85px">2019.11.26.</div>
<div class="c" style="left:3px;top:15.88px;width:114.20px">Acsa Zsófi</div>
<div class="c" style="left:117.5px;top:15.88px;width:83.70px">Acsáné Kiss Ilona</div>
<div class="c" style="left:277.5px;top:15.88px;width:49.20px">2018.10.10</div>
<div class="c" style="left:378.5px;top:15.88px;width:75.70px">Budapest, XI. kerület</div>
<div class="c" style="left:454.5px;top:15.88px;width:78.95px">Kossuth</div>
<div class="c" style="left:533.75px;top:15.88px;width:122.35px">Nincs családban</div>
<div class="c" style="left:656.4px;top:15.88px;width:75.90px">2020.05.13. (TOV)</div>
<div class="c" style="left:732.6px;top:15.88px;width:75.85px">2020.03.16.</div>
<div class="c" style="left:3px;top:31.76px;width:114.20px">Adatok Nagyobb Gyerek</div>
<div class="c" style="left:117.5px;top:31.76px;width:83.70px">Adatok Bevitele</div>
<div class="c" style="left:277.5px;top:31.76px;width:49.20px">2019.04.22</div>
<div class="c" style="left:378.5px;top:31.76px;width:75.70px">Budapest, XI. kerület</div>
<div class="c" style="left:454.5px;top:31.76px;width:78.95px">Fő</div>
<div class="c" style="left:533.75px;top:31.76px;width:122.35px">Nincs családban</div>
<div class="c" style="left:656.4px;top:31.76px;width:75.90px">Nincs tanácsadása</div>
<div class="c" style="left:732.6px;top:31.76px;width:75.85px">Nincs látogatása</div>
<div class="c" style="left:3px;top:47.64px;width:114.20px">Aranyos Julis</div>
<div class="c" style="left:277.5px;top:47.64px;width:49.20px">2020.09.27</div>
<div class="c" style="left:327px;top:47.64px;width:51.20px">000-000-000</div>
<div class="c" style="left:378.5px;top:47.64px;width:75.70px">Budapest, XI. kerület</div>
<div class="c" style="left:454.5px;top:47.64px;width:78.95px">Nagy Béla</div>
<div class="c" style="left:533.75px;top:47.64px;width:122.35px">Nincs családban</div>
<div class="c" style="left:656.4px;top:47.64px;width:75.90px">2020.09.27. (TOV)</div>
<div class="c" style="left:732.6px;top:47.64px;width:75.85px">Nincs látogatása</div>
<div class="c" style="left:3px;top:63.52px;width:114.20px">Aranyos Ugor</div>
<div class="c" style="left:117.5px;top:63.52px;width:83.70px">Angyal Judit</div>
<div class="c" style="left:277.5px;top:63.52px;width:49.20px">2017.11.18</div>
<div class="c" style="left:327px;top:63.52px;width:51.20px">000-000-000</div>
<div class="c" style="left:378.5px;top:63.52px;width:75.70px">Budapest, XI. kerület</div>
<div class="c" style="left:454.5px;top:63.52px;width:78.95px">Második</div>
<div class="c" style="left:533.75px;top:63.52px;width:122.35px">A1</div>
<div class="c" style="left:656.4px;top:63.52px;width:75.90px">Nincs tanácsadása</div>
<div class="c" style="left:732.6px;top:63.52px;width:75.85px">Nincs látogatása</div>
<div class="c" style="left:3px;top:79.40px;width:114.20px">Balogh Anna</div>
<div class="c" style="left:117.5px;top:79.40px;width:83.70px">Baloghné Kovács Anna</div>
<div class="c" style="left:277.5px;top:79.40px;width:49.20px">2024.03.26</div>
<div class="c" style="left:378.5px;top:79.40px;width:75.70px">Budapest, XVI. kerület</div>
<div class="c" style="left:454.5px;top:79.40px;width:78.95px">Zsemlékes</div>
<div class="c" style="left:533.75px;top:79.40px;width:122.35px">Baloghné Lakatos Annamária családja</div>
<div class="c" style="left:656.4px;top:79.40px;width:75.90px">2024.03.26. (TV)</div>
<div class="c" style="left:732.6px;top:79.40px;width:75.85px">Nincs látogatása</div>
<div class="c" style="left:3px;top:95.28px;width:114.20px">Balogh Barnabás</div>
<div class="c" style="left:117.5px;top:95.28px;width:83.70px">Baloghné Kovács Anna</div>
<div class="c" style="left:277.5px;top:95.28px;width:49.20px">2023.01.01</div>
<div class="c" style="left:378.5px;top:95.28px;width:75.70px">Budapest, XVI. kerület</div>
<div class="c" style="left:454.5px;top:95.28px;width:78.95px">Zsemlékes</div>
<div class="c" style="left:533.75px;top:95.28px;width:122.35px">Nincs családban</div>
<div class="c" style="left:656.4px;top:95.28px;width:75.90px">2023.02.03. (TV)</div>
<div class="c" style="left:732.6px;top:95.28px;width:75.85px">Nincs látogatása</div>
<div class="c" style="left:3px;top:111.16px;width:114.20px">Billog Miki</div>
<div class="c" style="left:117.5px;top:111.16px;width:83.70px">Kállai Elizabet</div>
<div class="c" style="left:201.5px;top:111.16px;width:75.70px">0630-555-1234</div>
<div class="c" style="left:277.5px;top:111.16px;width:49.20px">2021.06.10</div>
<div class="c" style="left:378.5px;top:111.16px;width:75.70px">Budapest, XI. kerület</div>
<div class="c" style="left:454.5px;top:111.16px;width:78.95px">Harmadik</div>
<div class="c" style="left:533.75px;top:111.16px;width:122.35px">Kállai Elizabet Családja</div>
<div class="c" style="left:656.4px;top:111.16px;width:75.90px">Nincs tanácsadása</div>
<div class="c" style="left:732.6px;top:111.16px;width:75.85px">Nincs látogatása</div>
<div class="c" style="left:3px;top:127.04px;width:114.20px">Billog Nikolett</div>
<div class="c" style="left:117.5px;top:127.04px;width:83.70px">Kállai Elizabet</div>
<div class="c" style="left:277.5px;top:127.04px;width:49.20px">2016.12.24</div>
<div class="c" style="left:378.5px;top:127.04px;width:75.70px">Budapest, XI. kerület</div>
<div class="c" style="left:454.5px;top:127.04px;width:78.95px">Harmadik</div>
<div class="c" style="left:533.75px;top:127.04px;width:122.35px">Kállai Elizabet Családja</div>
<div class="c" style="left:656.4px;top:127.04px;width:75.90px">Nincs tanácsadása</div>
<div class="c" style="left:732.6px;top:127.04px;width:75.85px">2020.05.12.</div>
<div class="c" style="left:808.75px;top:127.04px;width:133.35px">Ezt a gondozottat a szülés-modul vette fel</div>
<div class="c" style="left:3px;top:142.92px;width:114.20px">Éteri Márk</div>
<div class="c" style="left:117.5px;top:142.92px;width:83.70px">Éteri Orsolya</div>
<div class="c" style="left:201.5px;top:142.92px;width:75.70px">70/36811</div>
<div class="c" style="left:277.5px;top:142.92px;width:49.20px">2018.11.02</div>
<div class="c" style="left:378.5px;top:142.92px;width:75.70px">Budapest, XI. kerület</div>
<div class="c" style="left:454.5px;top:142.92px;width:78.95px">Kosztolányi Dezső</div>
<div class="c" style="left:533.75px;top:142.92px;width:122.35px">Nincs családban</div>
<div class="c" style="left:656.4px;top:142.92px;width:75.90px">2020.02.28. (TV)</div>
<div class="c" style="left:732.6px;top:142.92px;width:75.85px">2020.05.10.</div>
<div class="c" style="left:3px;top:158.80px;width:114.20px">Éteri Mira</div>
<div class="c" style="left:117.5px;top:158.80px;width:83.70px">Éteri Orsolya</div>
<div class="c" style="left:201.5px;top:158.80px;width:75.70px">70/3681195</div>
<div class="c" style="left:277.5px;top:158.80px;width:49.20px">2018.11.02</div>
<div class="c" style="left:378.5px;top:158.80px;width:75.70px">Budapest, XI. kerület</div>
<div class="c" style="left:454.5px;top:158.80px;width:78.95px">Óriás Tihamér</div>
<div class="c" style="left:533.75px;top:158.80px;width:122.35px">Nincs családban</div>
<div class="c" style="left:656.4px;top:158.80px;width:75.90px">2020.02.28. (TV)</div>
<div class="c" style="left:732.6px;top:158.80px;width:75.85px">2020.05.10.</div>
<div class="c" style="left:3px;top:174.68px;width:114.20px">Fehér Anna</div>
<div class="c" style="left:117.5px;top:174.68px;width:83.70px">Fehér Borbála Ágnes</div>
<div class="c" style="left:277.5px;top:174.68px;width:49.20px">2024.03.11</div>
<div class="c" style="left:378.5px;top:174.68px;width:75.70px">Budapest, XI. kerület</div>
<div class="c" style="left:454.5px;top:174.68px;width:78.95px">Bocskai</div>
<div class="c" style="left:533.75px;top:174.68px;width:122.35px">Fehér Borbála Ágnes családja</div>
<div class="c" style="left:656.4px;top:174.68px;width:75.90px">2024.03.11. (TV)</div>
<div class="c" style="left:732.6px;top:174.68px;width:75.85px">Nincs látogatása</div>
<div class="c" style="left:3px;top:190.56px;width:114.20px">Havas Milán</div>
<div class="c" style="left:117.5px;top:190.56px;width:83.70px">&nbsp;Havasné Kelemen Karolina</div>
<div class="c" style="left:277.5px;top:190.56px;width:49.20px">2024.10.22</div>
<div class="c" style="left:378.5px;top:190.56px;width:75.70px">Budapest</div>
<div class="c" style="left:454.5px;top:190.56px;width:78.95px">Stefánia</div>
<div class="c" style="left:533.75px;top:190.56px;width:122.35px">&nbsp;Havasné Kelemen Karolina családja</div>
<div class="c" style="left:656.4px;top:190.56px;width:75.90px">2024.10.22. (TV)</div>
<div class="c" style="left:732.6px;top:190.56px;width:75.85px">Nincs látogatása</div>
<div class="c" style="left:3px;top:206.44px;width:114.20px">Hegedűs Gábor</div>
<div class="c" style="left:117.5px;top:206.44px;width:83.70px">Hegedűsné Molnár Anna Éva</div>
<div class="c" style="left:277.5px;top:206.44px;width:49.20px">2021.04.09</div>
<div class="c" style="left:378.5px;top:206.44px;width:75.70px">Budapest, XVI. kerület</div>
<div class="c" style="left:454.5px;top:206.44px;width:78.95px">Gálosfa</div>
<div class="c" style="left:533.75px;top:206.44px;width:122.35px">Hegedűsné Molnár Anna Éva családja</div>
<div class="c" style="left:656.4px;top:206.44px;width:75.90px">Nincs tanácsadása</div>
<div class="c" style="left:732.6px;top:206.44px;width:75.85px">Nincs látogatása</div>
<div class="c" style="left:3px;top:222.32px;width:114.20px">Hegedűs Ilona</div>
<div class="c" style="left:117.5px;top:222.32px;width:83.70px">Hegedűsné Molnár Anna Éva</div>
<div class="c" style="left:277.5px;top:222.32px;width:49.20px">2024.04.30</div>
<div class="c" style="left:378.5px;top:222.32px;width:75.70px">Budapest, XVI. kerület</div>
<div class="c" style="left:454.5px;top:222.32px;width:78.95px">Gálosfa</div>
<div class="c" style="left:533.75px;top:222.32px;width:122.35px">Hegedűsné Molnár Anna Éva családja</div>
<div class="c" style="left:656.4px;top:222.32px;width:75.90px">2024.04.30. (TV)</div>
<div class="c" style="left:732.6px;top:222.32px;width:75.85px">Nincs látogatása</div>
<div class="c" style="left:3px;top:238.20px;width:114.20px">Horváth Elza</div>
<div class="c" style="left:117.5px;top:238.20px;width:83.70px">Feketéné Horváth Anna</div>
<div class="c" style="left:277.5px;top:238.20px;width:49.20px">2024.04.15</div>
<div class="c" style="left:378.5px;top:238.20px;width:75.70px">Budapest, XVI. kerület</div>
<div class="c" style="left:454.5px;top:238.20px;width:78.95px">Veres Péter</div>
<div class="c" style="left:533.75px;top:238.20px;width:122.35px">Feketéné Horváth Anna családja</div>
<div class="c" style="left:656.4px;top:238.20px;width:75.90px">2024.04.15. (TV)</div>
<div class="c" style="left:732.6px;top:238.20px;width:75.85px">Nincs látogatása</div>
<div class="c" style="left:3px;top:254.08px;width:114.20px">Kalapos Éva</div>
<div class="c" style="left:117.5px;top:254.08px;width:83.70px">Kalapos Péterné Horváth Ilona</div>
<div class="c" style="left:277.5px;top:254.08px;width:49.20px">2024.03.04</div>
<div class="c" style="left:378.5px;top:254.08px;width:75.70px">Budapest, XVI. kerület</div>
<div class="c" style="left:454.5px;top:254.08px;width:78.95px">Újszász</div>
<div class="c" style="left:533.75px;top:254.08px;width:122.35px">Kalapos Ilona családja</div>
<div class="c" style="left:656.4px;top:254.08px;width:75.90px">2024.03.04. (TV)</div>
<div class="c" style="left:732.6px;top:254.08px;width:75.85px">Nincs látogatása</div>
<div class="c" style="left:3px;top:269.96px;width:114.20px">Kállai Levente</div>
<div class="c" style="left:117.5px;top:269.96px;width:83.70px">Tizenharmadik Adélia</div>
<div class="c" style="left:277.5px;top:269.96px;width:49.20px">2021.06.05</div>
<div class="c" style="left:378.5px;top:269.96px;width:75.70px">Budapest, XI. kerület</div>
<div class="c" style="left:454.5px;top:269.96px;width:78.95px">Bartók Béla</div>
<div class="c" style="left:533.75px;top:269.96px;width:122.35px">Nincs családban</div>
<div class="c" style="left:656.4px;top:269.96px;width:75.90px">Nincs tanácsadása</div>
<div class="c" style="left:732.6px;top:269.96px;width:75.85px">Nincs látogatása</div>
<div class="c" style="left:808.75px;top:269.96px;width:133.35px">Ezt a gondozottat a szülés-modul vette fel</div>
<div class="c" style="left:3px;top:285.84px;width:114.20px">Kapus Izabella</div>
<div class="c" style="left:117.5px;top:285.84px;width:83.70px">Kapus Helga Anna</div>
<div class="c" style="left:277.5px;top:285.84px;width:49.20px">2024.02.29</div>
<div class="c" style="left:378.5px;top:285.84px;width:75.70px">Budapest, XI. kerület</div>
<div class="c" style="left:454.5px;top:285.84px;width:78.95px">Béke</div>
<div class="c" style="left:533.75px;top:285.84px;width:122.35px">Kapus Helga Anna családja</div>
<div class="c" style="left:656.4px;top:285.84px;width:75.90px">2024.04.11. (TOV)</div>
<div class="c" style="left:732.6px;top:285.84px;width:75.85px">Nincs látogatása</div>
<div class="c" style="left:3px;top:301.72px;width:114.20px">Kedves Anna</div>
<div class="c" style="left:117.5px;top:301.72px;width:83.70px">Kedves Natália Éva</div>
<div class="c" style="left:277.5px;top:301.72px;width:49.20px">2024.02.10</div>
<div class="c" style="left:378.5px;top:301.72px;width:75.70px">Budapest, XI. kerület</div>
<div class="c" style="left:454.5px;top:301.72px;width:78.95px">Nagy Ádám</div>
<div class="c" style="left:533.75px;top:301.72px;width:122.35px">Kedves Natália Éva családja</div>
<div class="c" style="left:656.4px;top:301.72px;width:75.90px">2024.02.12. (TV)</div>
<div class="c" style="left:732.6px;top:301.72px;width:75.85px">Nincs látogatása</div>
</div>
<div id="stband" class="abs"></div><div id="status" class="abs"></div>
<div class="t" style="left:6px;top:527.5px;font-size:9.9px;font-weight:bold;color:#111">Gondozottak száma: 46</div>
<div class="abs" style="left:837px;top:522px;width:19px;height:20px;border:1px solid #b4b4b4;border-bottom:none;background:#fbfbfb"></div>
<svg class="abs" style="left:840px;top:525px" width="14" height="14" viewBox="0 0 14 14"><circle cx="6.7" cy="6.9" r="5.6" fill="#eaf4fc" stroke="#6a7e95" stroke-width="0.9"/><path d="M6.7 1.3 A5.6 5.6 0 0 1 10.2 11.3 L6.7 6.9Z" fill="#2f7bd4"/><path d="M6.7 1.8V6.9 M6.7 6.9 L3 7" stroke="#556" stroke-width="0.7"/></svg>
<div class="abs" style="left:857px;top:522px;width:167px;height:20px;border-top:1px solid #b4b4b4;border-left:1px solid #b4b4b4"></div>
<div class="t" style="left:875.5px;top:528px;font-size:8.47px;color:#111">Program verziószáma: 2.5.204.2902</div>
<div id="menu" class="abs"></div>
<div class="t" style="left:445.5px;top:37.30px;font-size:9.3px;transform:scaleX(0.947);transform-origin:0 0;color:#000">Folyamatos oltás</div>
<div class="t" style="left:602.5px;top:37.30px;font-size:9.3px;transform:scaleX(1.018);transform-origin:0 0;color:#000">Ctrl+Alt+O</div>
<div class="t" style="left:445.5px;top:51.70px;font-size:9.3px;transform:scaleX(0.926);transform-origin:0 0;color:#000">Élveszületési/halálozási</div>
<div class="t" style="left:604.6px;top:51.70px;font-size:9.3px;transform:scaleX(0.993);transform-origin:0 0;color:#000">Ctrl+Alt+E</div>
<div class="t" style="left:445.5px;top:66.10px;font-size:9.3px;transform:scaleX(0.916);transform-origin:0 0;color:#000">Élveszületések havi jelentése</div>
<div class="t" style="left:602.5px;top:66.10px;font-size:9.3px;transform:scaleX(1.030);transform-origin:0 0;color:#000">Ctrl+Alt+H</div>
<div class="t" style="left:445.5px;top:80.50px;font-size:9.3px;transform:scaleX(0.945);transform-origin:0 0;color:#000">Havi jelentés</div>
<div class="t" style="left:619.8px;top:80.50px;font-size:9.3px;transform:scaleX(1.011);transform-origin:0 0;color:#000">Ctrl+H</div>
<div class="abs" style="left:428px;top:91.40px;width:228px;height:14.4px;background:#0078d7"></div>
<div class="t" style="left:445.5px;top:94.90px;font-size:9.3px;transform:scaleX(0.926);transform-origin:0 0;color:#fff">Éves jelentés (terület)</div>
<div class="t" style="left:445.5px;top:109.30px;font-size:9.3px;transform:scaleX(0.930);transform-origin:0 0;color:#000">Távolmaradás védőoltásról (3 értesítés)</div>
<div class="t" style="left:445.5px;top:123.70px;font-size:9.3px;transform:scaleX(0.942);transform-origin:0 0;color:#000">Távolmaradás védőoltásról (2, 3 hónap)</div>
<div class="t" style="left:621.8px;top:123.70px;font-size:9.3px;transform:scaleX(0.974);transform-origin:0 0;color:#000">Ctrl+T</div>
<div class="t" style="left:445.5px;top:138.10px;font-size:9.3px;transform:scaleX(0.929);transform-origin:0 0;color:#000">Hathónapos BCG hegleolvasás</div>
<div class="t" style="left:621.3px;top:138.10px;font-size:9.3px;transform:scaleX(0.973);transform-origin:0 0;color:#000">Ctrl+B</div>
<div class="t" style="left:445.5px;top:152.50px;font-size:9.3px;transform:scaleX(0.945);transform-origin:0 0;color:#000">Kampányoltás jelentés</div>
<div class="t" style="left:621.3px;top:152.50px;font-size:9.3px;transform:scaleX(0.973);transform-origin:0 0;color:#000">Ctrl+K</div>
<div class="t" style="left:445.5px;top:166.90px;font-size:9.3px;transform:scaleX(0.920);transform-origin:0 0;color:#000">Méhnyakszűrés jelentés készítése</div>
<div class="t" style="left:445.5px;top:181.30px;font-size:9.3px;transform:scaleX(0.926);transform-origin:0 0;color:#000">Méhnyakszűrés jelentés előkészítése feladáshoz</div>
<div class="abs" style="left:430px;top:194.80px;width:226px;height:1px;background:#c8c8c8"></div>
<div class="t" style="left:445.5px;top:201.70px;font-size:9.3px;transform:scaleX(0.932);transform-origin:0 0;color:#000">Jelentés az iskolaegészségügyi munkáról</div>
<div class="t" style="left:624.4px;top:201.70px;font-size:9.3px;transform:scaleX(0.992);transform-origin:0 0;color:#000">Ctrl+I</div>
<div class="t" style="left:445.5px;top:216.10px;font-size:9.3px;transform:scaleX(0.914);transform-origin:0 0;color:#000">Tetvesség jelentés</div>
<div class="t" style="left:621.8px;top:216.10px;font-size:9.3px;transform:scaleX(0.954);transform-origin:0 0;color:#000">Ctrl+E</div>
<div class="t" style="left:445.5px;top:230.50px;font-size:9.3px;transform:scaleX(0.931);transform-origin:0 0;color:#000">Kampányoltás jelentés (2016, tételes)</div>
<div class="t" style="left:445.5px;top:244.90px;font-size:9.3px;transform:scaleX(0.937);transform-origin:0 0;color:#000">Kampányoltás jelentés (összesített)</div>
<svg class="abs" style="left:0;top:0" width="1024" height="120"><rect x="427.2" y="15.85" width="52.3" height="16.1" fill="none" stroke="#fd7f23" stroke-width="3.6"/><rect x="423.55" y="90.15" width="231.3" height="16.6" fill="none" stroke="#fd7f23" stroke-width="3.9"/></svg>
<svg class="abs" style="left:0;top:0" width="1024" height="120"><path d="M404.9 5.1 L410.6 2.07 L413.9 2.07 L413.9 20.7 L408.8 20.7 L408.8 7.6 L405.8 9.1Z" fill="#fd7f23"/><circle cx="421.5" cy="18.7" r="2.5" fill="#fd7f23"/><path d="M397.8 89.6 Q400.5 87.65 403.3 87.65 Q407.85 87.65 407.85 91.6 Q407.85 94.5 403.5 98.3 L398.6 103.05 M397 103.05 H409.6" stroke="#fd7f23" stroke-width="3.5" fill="none"/><circle cx="414.7" cy="102.5" r="2.5" fill="#fd7f23"/></svg>
</body></html>
